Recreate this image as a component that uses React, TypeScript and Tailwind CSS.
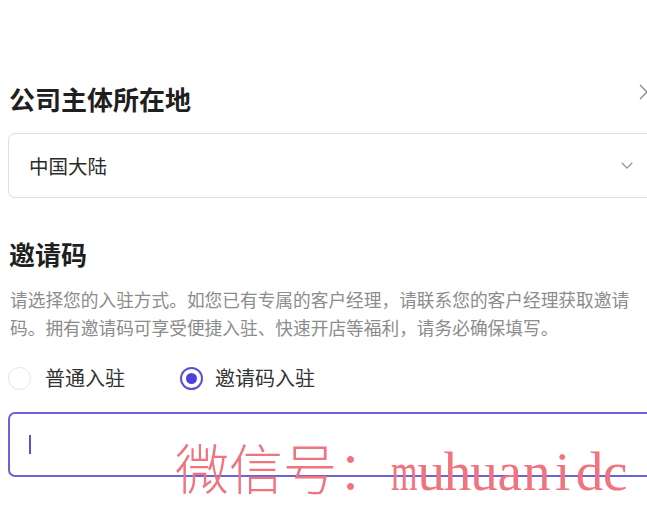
import React from "react";

const cjk = "font-['Noto_Sans_CJK_SC','Noto_Sans',sans-serif]";

function Radio({ checked }: { checked: boolean }) {
  return checked ? (
    <span className="flex h-[23px] w-[23px] items-center justify-center rounded-full border-2 border-[#5b51d8] bg-white">
      <span className="h-[11px] w-[11px] rounded-full bg-[#4c40e0]" />
    </span>
  ) : (
    <span className="h-[23px] w-[23px] rounded-full border border-[#e6e6e6] bg-white" />
  );
}

export default function App() {
  const latin = "muhuanidc".split("");
  return (
    <div className={`relative h-[511px] w-[647px] overflow-hidden bg-white ${cjk}`}>
      <div className="w-[660px] pl-[8px] pt-[80px]">
        <div className="flex h-[38px] items-center justify-between pr-[5px]">
          <h1 className="ml-[1px] text-[26px] font-bold leading-[38px] text-[#1f1f1f]">公司主体所在地</h1>
          <svg width="16" height="16" viewBox="0 0 16 16" className="mt-[-14px]">
            <path d="M1 1 L15 15 M15 1 L1 15" stroke="#8a8a8a" strokeWidth="1.4" fill="none" />
          </svg>
        </div>
        <div className="mt-[15px] flex h-[65px] items-center justify-between rounded-[7px] border border-[#dedede] pl-[20px] pr-[26px]">
          <span className="text-[19.5px] leading-none text-[#2b2b2b]">中国大陆</span>
          <svg width="12" height="7" viewBox="0 0 12 7">
            <path d="M0.7 0.7 L6 6 L11.3 0.7" stroke="#9a9a9a" strokeWidth="1.3" fill="none" />
          </svg>
        </div>
        <h2 className="ml-[1px] mt-[37px] text-[26px] font-bold leading-[38px] text-[#1f1f1f]">邀请码</h2>
        <p className="ml-[2px] mt-[12px] text-[17.7px] leading-[28px] text-[#8c8c8c] whitespace-nowrap">
          请选择您的入驻方式。如您已有专属的客户经理，请联系您的客户经理获取邀请
          <br />
          码。拥有邀请码可享受便捷入驻、快速开店等福利，请务必确保填写。
        </p>
        <div className="mt-[22px] flex h-[30px] items-center">
          <label className="flex items-center gap-[14px]">
            <Radio checked={false} />
            <span className="text-[20px] leading-none text-[#333333]">普通入驻</span>
          </label>
          <label className="ml-[55px] flex items-center gap-[12px]">
            <Radio checked={true} />
            <span className="text-[20px] leading-none text-[#333333]">邀请码入驻</span>
          </label>
        </div>
        <div className="mt-[19px] flex h-[65px] items-center rounded-[7px] border-2 border-[#6d64d4] pl-[19px]">
          <span className="h-[19px] w-[2px] bg-[#5b51d8]" />
        </div>
      </div>

      <div className="absolute left-[175px] top-[440px] flex items-baseline leading-none text-[#f07480]">
        <span className="text-[54px] font-light">微信号：</span>
        <span className="flex items-baseline font-['Liberation_Serif',serif] text-[55px]">
          {latin.map((c, i) =>
            c === "m" ? (
              <span key={i} className="inline-block w-[26.4px] text-center text-[34px] scale-y-[1.6] origin-[50%_81.6%]">
                {c}
              </span>
            ) : (
              <span key={i} className="inline-block w-[26.4px] text-center">
                {c}
              </span>
            )
          )}
        </span>
      </div>
    </div>
  );
}
